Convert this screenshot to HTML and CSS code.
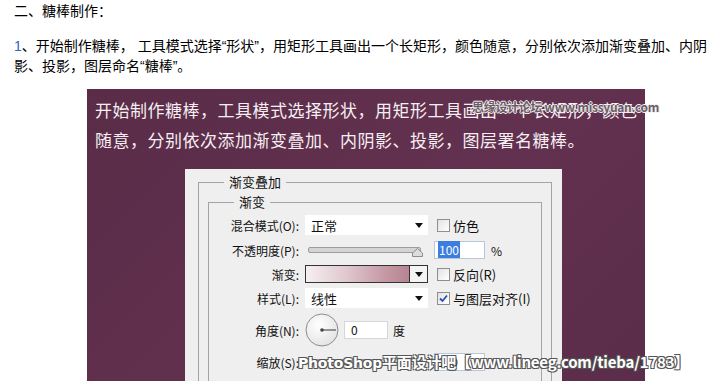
FILE: index.html
```html
<!DOCTYPE html>
<html>

<head>
    <title>糖棒制作</title>
    <meta charset="UTF-8">
    <link rel="stylesheet" href="styles.css">
</head>

<body>
    <div class="article">
        <p class="step-title">二、糖棒制作：</p>
        <p class="step-text"><span class="num">1</span>、开始制作糖棒， 工具模式选择“形状”，用矩形工具画出一个长矩形，颜色随意，分别依次添加渐变叠加、内阴影、投影，图层命名“糖棒”。</p>

        <div class="shot">
            <p class="shot-caption">开始制作糖棒，工具模式选择形状，用矩形工具画出一个长矩形，颜色随意，分别依次添加渐变叠加、内阴影、投影，图层署名糖棒。</p>
            <span class="mark-top">思缘设计论坛 www.missyuan.com</span>

            <div class="dialog">
                <fieldset class="group">
                    <legend>渐变叠加</legend>
                    <fieldset class="group inner">
                        <legend>渐变</legend>
                        <div class="form">
                            <span class="lbl">混合模式(O):</span>
                            <div class="select"><span>正常</span><i class="caret"></i></div>
                            <span class="check"><i class="box"></i>仿色</span>

                            <span class="lbl">不透明度(P):</span>
                            <div class="slider">
                                <span class="track"></span>
                                <svg class="thumb" width="11" height="9" viewBox="0 0 11 9"><path d="M0.5 8.5 L0.5 5 L5.5 0.5 L10.5 5 L10.5 8.5 Z" fill="#dcdcdc" stroke="#8c8c8c"/></svg>
                            </div>
                            <div class="num-field"><span class="field"><span class="picked">100</span></span><span class="unit">%</span></div>

                            <span class="lbl">渐变:</span>
                            <div class="grad-pick"><span class="swatch"></span><span class="pick-btn"><i class="caret"></i></span></div>
                            <span class="check"><i class="box"></i>反向(R)</span>

                            <span class="lbl">样式(L):</span>
                            <div class="select"><span>线性</span><i class="caret"></i></div>
                            <span class="check"><i class="box checked"><svg width="11" height="11" viewBox="0 0 11 11"><path d="M2 5.5 L4.5 8 L9 2.5" fill="none" stroke="#2a4fa8" stroke-width="1.8"/></svg></i>与图层对齐(I)</span>

                            <span class="lbl">角度(N):</span>
                            <div class="angle">
                                <svg class="dial" width="34" height="34" viewBox="0 0 34 34">
                                    <defs>
                                        <radialGradient id="dialFill" cx="40%" cy="35%" r="70%">
                                            <stop offset="0" stop-color="#ffffff"/>
                                            <stop offset="1" stop-color="#e2e2e2"/>
                                        </radialGradient>
                                    </defs>
                                    <circle cx="17" cy="17" r="16" fill="url(#dialFill)" stroke="#8e8e8e"/>
                                    <line x1="17" y1="17" x2="31" y2="17" stroke="#555" stroke-width="1.2"/>
                                    <circle cx="17" cy="17" r="1.8" fill="#444"/>
                                </svg>
                                <span class="field small">0</span>
                                <span class="unit">度</span>
                            </div>
                            <span></span>

                            <span class="lbl">缩放(S):</span>
                            <div class="slider">
                                <span class="track"></span>
                            </div>
                            <div class="num-field"><span class="field">100</span><span class="unit">%</span></div>
                        </div>
                    </fieldset>
                </fieldset>
            </div>

            <span class="mark-bottom"><b>PhotoShop</b>平面设计吧【www.lineeg.com/tieba/1783】</span>
        </div>
    </div>
</body>

</html>
```

FILE: styles.css
```css
body {
    margin: 0;
    background-color: #ffffff;
    font-family: "Noto Sans CJK SC", "Liberation Sans", sans-serif;
    overflow: hidden;
}

.article {
    padding: 1px 0 0 14px;
    width: 700px;
}

.step-title,
.step-text {
    margin: 0;
    font-family: "Liberation Sans", "Noto Sans CJK SC", sans-serif;
    font-size: 14px;
    line-height: 20px;
    color: #000000;
}

.step-text {
    margin-top: 15px;
}

.num {
    color: #2f62c8;
}

.shot {
    position: relative;
    margin: 13px 0 0 73px;
    width: 558px;
    height: 300px;
    background-color: #5d2e4b;
    background-image: linear-gradient(135deg, #5a2c48 0%, #62314f 55%, #5b2d4a 100%);
}

.shot-caption {
    margin: 0;
    padding: 6px 6px 0 8px;
    font-size: 17px;
    letter-spacing: 0.5px;
    line-height: 30px;
    color: #f6eef2;
}

.mark-top {
    position: absolute;
    left: 385px;
    top: 9px;
    font-size: 12px;
    font-weight: bold;
    color: #6e5a66;
    letter-spacing: -0.3px;
    text-shadow: 1px 0 0 #eee, -1px 0 0 #eee, 0 1px 0 #eee, 0 -1px 0 #eee;
    white-space: nowrap;
}

.dialog {
    margin: 14px 0 0 98px;
    width: 377px;
    height: 220px;
    padding: 5px 10px 0 13px;
    box-sizing: border-box;
    background-color: #efefef;
}

.group {
    margin: 0;
    padding: 4px 9px 0 9px;
    border: 1px solid #a4a4a4;
    border-bottom: none;
    height: 220px;
    font-size: 12px;
}

.group legend {
    padding: 0 5px;
    margin-left: 16px;
    line-height: 16px;
    font-size: 13px;
    color: #111111;
}

.inner {
    padding: 5px 10px 0 10px;
}

.inner legend {
    margin-left: 15px;
}

.form {
    display: grid;
    grid-template-columns: 80px 123px auto;
    grid-template-rows: 20px 20px 18px 20px 34px 20px;
    column-gap: 6px;
    row-gap: 5px;
    align-items: center;
    font-size: 12px;
    color: #111111;
}

.lbl {
    text-align: right;
    white-space: nowrap;
}

.select {
    height: 20px;
    background-color: #ffffff;
    display: flex;
    align-items: center;
    justify-content: space-between;
    padding: 0 5px 0 6px;
    font-size: 13px;
}

.caret {
    width: 0;
    height: 0;
    border-left: 4px solid transparent;
    border-right: 4px solid transparent;
    border-top: 5px solid #111111;
}

.check {
    display: flex;
    align-items: center;
    gap: 3px;
    margin-left: 3px;
    font-size: 13px;
    white-space: nowrap;
}

.box {
    width: 11px;
    height: 11px;
    border: 1px solid #8f8f8f;
    background: linear-gradient(135deg, #e2e2e2, #ffffff);
    display: flex;
}

.slider {
    position: relative;
    height: 20px;
    margin-right: 7px;
}

.track {
    position: absolute;
    left: 3px;
    right: 0;
    top: 7px;
    height: 4px;
    border-radius: 2px;
    border: 1px solid #9c9c9c;
    background-color: #d4d4d4;
}

.thumb {
    position: absolute;
    right: -2px;
    top: 8px;
}

.num-field {
    display: flex;
    align-items: center;
    gap: 6px;
}

.field {
    width: 46px;
    height: 16px;
    border: 1px solid #b9c7d9;
    background-color: #ffffff;
    padding-left: 3px;
    font-size: 12px;
    line-height: 16px;
}

.picked {
    background-color: #3a7ee0;
    color: #ffffff;
    padding: 0 1px;
}

.field.small {
    width: 36px;
    border-color: #d6d6d6;
    padding-left: 6px;
}

.unit {
    font-size: 12px;
}

.grad-pick {
    display: flex;
    height: 18px;
    border: 1px solid #333333;
    box-sizing: border-box;
}

.swatch {
    flex: 1;
    background: linear-gradient(to right, #f5eff1 0%, #dfc7cd 40%, #c69aa6 75%, #b68492 100%);
}

.pick-btn {
    width: 17px;
    border-left: 1px solid #333333;
    background-color: #f4f4f4;
    display: flex;
    align-items: center;
    justify-content: center;
}

.angle {
    display: flex;
    align-items: center;
    gap: 5px;
}

.dial {
    margin-left: 0;
}

.mark-bottom {
    position: absolute;
    left: 211px;
    top: 262px;
    font-size: 15px;
    font-weight: bold;
    color: #ffffff;
    white-space: nowrap;
    letter-spacing: -0.2px;
    text-shadow: 1px 1px 0 #555, -1px -1px 0 #555, 1px -1px 0 #555, -1px 1px 0 #555;
}

.mark-bottom b {
    font-family: "DejaVu Sans", sans-serif;
    font-size: 14px;
}
```
